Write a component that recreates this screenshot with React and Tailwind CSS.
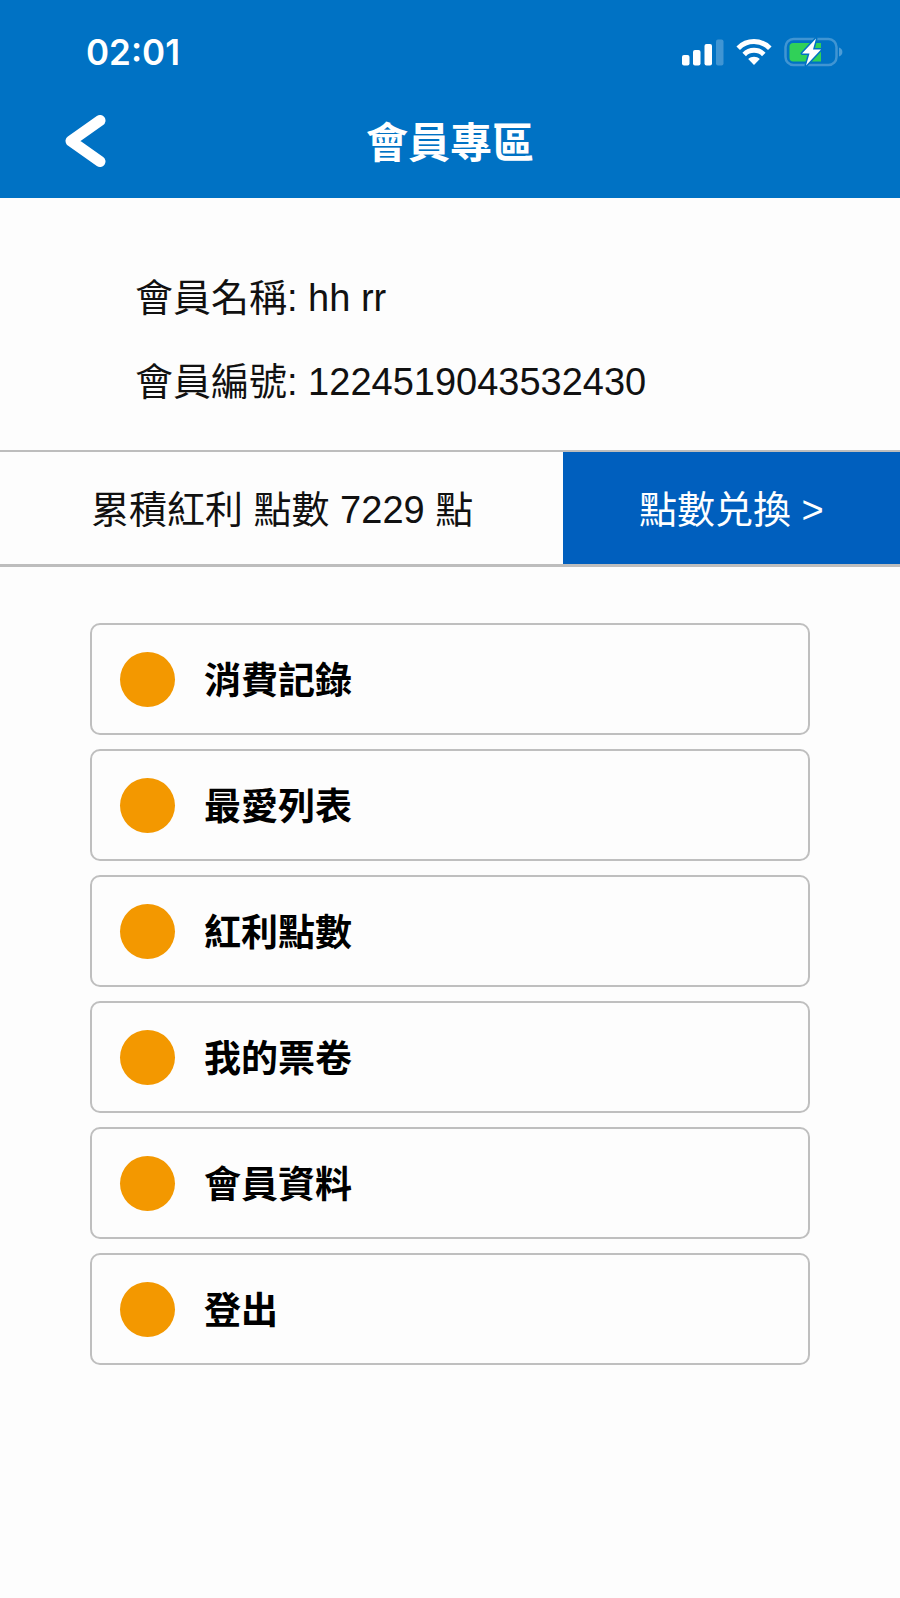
const MENU_ITEMS = ['消費記錄', '最愛列表', '紅利點數', '我的票卷', '會員資料', '登出'];

function SignalIcon() {
  return (
    <svg width="44" height="28" viewBox="0 0 44 28" fill="#fff" aria-hidden="true">
      <rect x="2" y="17" width="7.500" height="10.500" rx="2" />
      <rect x="13" y="12" width="7.500" height="15.500" rx="2" />
      <rect x="24.500" y="6" width="7.500" height="21.500" rx="2" />
      <rect x="36" y="1.500" width="7.500" height="26" rx="2" opacity="0.25" />
    </svg>
  );
}

function WifiIcon() {
  return (
    <svg width="36" height="28" viewBox="0 0 36 28" aria-hidden="true">
      <g fill="none" stroke="#fff" strokeWidth="5">
        <path d="M2.2 10.2C11 1.4 25 1.4 33.8 10.2" />
        <path d="M8.2 16.4C13.6 11 22.4 11 27.8 16.4" />
      </g>
      <path d="M18 27L12.2 21C15.4 17.9 20.6 17.9 23.8 21Z" fill="#fff" />
    </svg>
  );
}

function BatteryIcon() {
  return (
    <svg width="60" height="32" viewBox="0 0 60 32" aria-hidden="true">
      <rect x="1.5" y="3" width="51" height="26" rx="8" fill="none" stroke="#fff" strokeOpacity="0.25" strokeWidth="2.5" />
      <path d="M55 11.500C59.500 13 59.500 19 55 20.500Z" fill="#fff" fillOpacity="0.3" />
      <path d="M9 7H37V25.500H9C7 25.500 5.500 24 5.500 22V10.500C5.500 8.500 7 7 9 7Z" fill="#30d158" />
      <path
        d="M32 2.500L18 17.500H25.500L22 29.500L37 13.500H29Z"
        fill="#fff"
        stroke="#0072c4"
        strokeWidth="3"
        strokeLinejoin="round"
        paintOrder="stroke"
      />
    </svg>
  );
}

function Header() {
  return (
    <header className="bg-[#0072c4] text-white">
      <div className="flex h-24 items-center justify-between pt-2 pr-14 pl-[86px]">
        <span className="font-[Inter,sans-serif] text-[35px] leading-10 font-semibold">02:01</span>
        <div className="flex items-center gap-3">
          <SignalIcon />
          <WifiIcon />
          <BatteryIcon />
        </div>
      </div>
      <div className="grid h-[102px] grid-cols-[1fr_auto_1fr] items-start px-[62px] pt-[18px]">
        <button type="button" aria-label="返回" className="w-fit">
          <svg width="44" height="54" viewBox="0 0 44 54" fill="none" aria-hidden="true">
            <path d="M38 6.500L9 27L38 47.500" stroke="#fff" strokeWidth="11" strokeLinecap="round" strokeLinejoin="round" />
          </svg>
        </button>
        <h1 className="text-[42px] leading-[60px] font-bold">會員專區</h1>
      </div>
    </header>
  );
}

function App() {
  return (
    <div className="min-h-screen bg-[#fdfdfd] font-['Liberation_Sans','Noto_Sans_CJK_TC',sans-serif] text-[38px] text-[#111]">
      <Header />

      <section className="px-[135px] pt-[58px] pb-[26px] leading-[84px]">
        <p>會員名稱: hh rr</p>
        <p>會員編號: 1224519043532430</p>
      </section>

      <section className="grid grid-cols-[5fr_3fr] border-t-2 border-b-3 border-[#bdbdbd] leading-[108px]">
        <p className="pt-1 pl-[91px]">累積紅利 點數 7229 點</p>
        <button type="button" className="bg-[#005fbe] pt-1 text-center text-white">
          點數兑換 &gt;
        </button>
      </section>

      <nav className="flex flex-col gap-3.5 px-[90px] pt-14 pb-16">
        {MENU_ITEMS.map((label) => (
          <button
            key={label}
            type="button"
            className="flex h-28 items-center gap-[29px] rounded-[10px] border-2 border-[#bfbfbf] pl-7 text-[37px] font-bold text-black"
          >
            <span className="size-[55px] rounded-full bg-[#f39800]" />
            <span className="pt-1.5">{label}</span>
          </button>
        ))}
      </nav>
    </div>
  );
}

export default App;
